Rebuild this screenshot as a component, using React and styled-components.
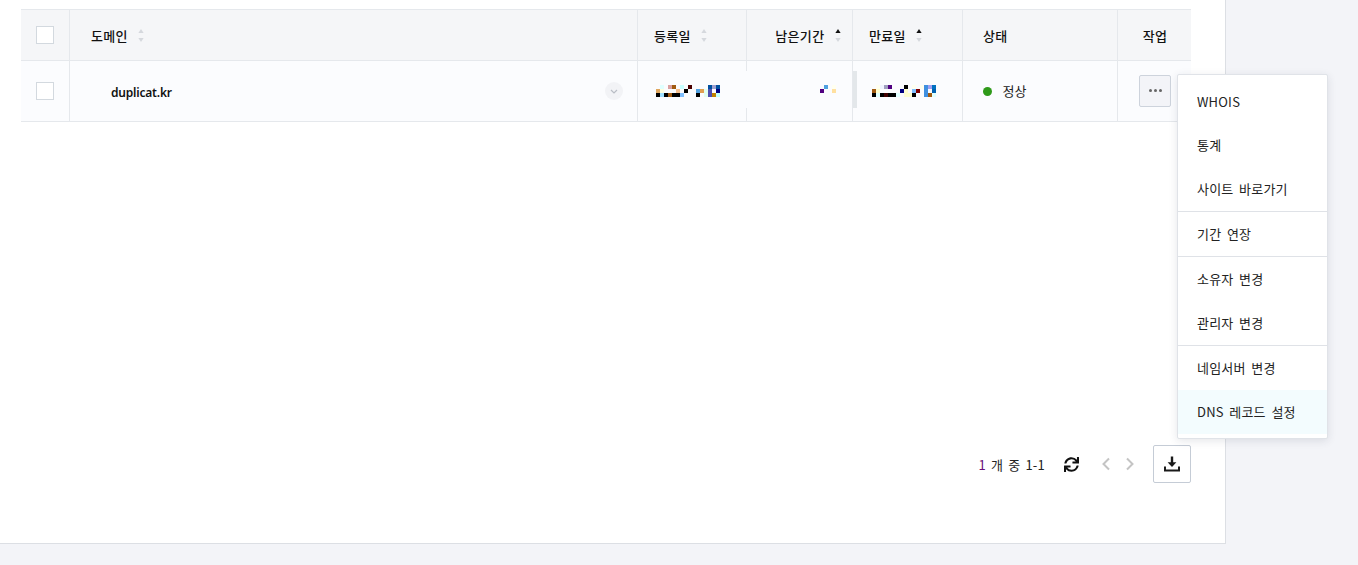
import React from 'react';
import styled, { createGlobalStyle } from 'styled-components';
import { FaSync } from 'react-icons/fa';

const Global = createGlobalStyle`
  html, body { margin: 0; padding: 0; height: 100%; background: #f3f4f8; }
  body { font-family: "Noto Sans CJK KR", "Noto Sans", sans-serif; font-size: 13px; color: #111; overflow: hidden; }
`;

const Page = styled.div`
  position: relative;
  width: 1358px;
  height: 565px;
`;
const Panel = styled.main`
  box-sizing: border-box;
  width: 1226px;
  height: 544px;
  background: #fff;
  border-right: 1px solid #dcdfe4;
  border-bottom: 1px solid #dcdfe4;
  padding: 9px 34px 0 21px;
`;
const Grid = styled.div`
  display: grid;
  grid-template-columns: 49px 568px 109px 106px 110px 155px 73px;
  width: 1170px;
`;
const HeadCell = styled.div`
  box-sizing: border-box;
  height: 52px;
  background: #f5f6f8;
  border-top: 1px solid #e5e8ec;
  border-bottom: 1px solid #e5e8ec;
  border-right: ${p => (p.$last ? 'none' : '1px solid #e5e8ec')};
  display: flex;
  align-items: center;
  justify-content: ${p => p.$justify || 'flex-start'};
  padding: ${p => p.$pad || '0'};
  font-weight: 500;
  font-size: 13px;
  letter-spacing: 0.35px;
  line-height: 1;
  color: #111;
`;
const BodyCell = styled.div`
  box-sizing: border-box;
  position: relative;
  height: 61px;
  background: #fbfcfe;
  border-bottom: 1px solid #e5e8ec;
  border-right: ${p => (p.$last ? 'none' : '1px solid #e5e8ec')};
  display: flex;
  align-items: center;
  justify-content: ${p => p.$justify || 'flex-start'};
  padding: ${p => p.$pad || '0'};
  font-size: 13px;
`;
const BrokenBorder = styled.span`
  position: absolute;
  right: -1px;
  top: 10px;
  width: 1px;
  height: 37px;
  background: #fbfcfe;
`;
const ScrollMark = styled.span`
  position: absolute;
  left: 0;
  top: 10px;
  width: 4px;
  height: 37px;
  background: #e3e7ea;
`;
const Check = styled.span`
  box-sizing: border-box;
  width: 18px;
  height: 18px;
  background: #fff;
  border: 1px solid #d3d9df;
  display: block;
`;
const SortWrap = styled.svg`
  margin-left: 10.5px;
  flex: none;
`;
const DomainName = styled.span`
  font-family: "Noto Sans", sans-serif;
  font-weight: 600;
  font-size: 12px;
  letter-spacing: -0.2px;
  flex: 1;
  padding-top: 2px;
`;
const ExpandDot = styled.span`
  width: 18px;
  height: 18px;
  border-radius: 50%;
  background: #f2f3f6;
  display: flex;
  align-items: center;
  justify-content: center;
`;
const Status = styled.span`
  display: flex;
  align-items: center;
  gap: 10.5px;
  color: #222;
`;
const StatusLabel = styled.span`
  letter-spacing: 0.1px;
  margin-top: -2px;
`;
const Dot = styled.span`
  width: 9px;
  height: 9px;
  border-radius: 50%;
  background: #2f9a1a;
`;
const MoreButton = styled.button`
  box-sizing: border-box;
  width: 32px;
  height: 32px;
  padding: 0;
  margin: -1px 0 0 0;
  background: #f3f4f8;
  border: 1px solid #cdd3dc;
  border-radius: 2px;
  display: flex;
  align-items: center;
  justify-content: center;
  gap: 2px;
`;
const MoreDot = styled.i`
  width: 3px;
  height: 3px;
  border-radius: 50%;
  background: #666;
`;
const Footer = styled.div`
  display: flex;
  justify-content: flex-end;
  align-items: center;
  margin-top: 323px;
  height: 38px;
`;
const Count = styled.span`
  font-size: 13px;
  letter-spacing: 0.2px;
  word-spacing: 2px;
  color: #222;
  margin-right: 19px;
`;
const CountNum = styled.span`
  color: #6a0f7a;
`;
const Refresh = styled.span`
  display: flex;
  color: #111;
  margin-right: 23px;
`;
const Chevron = styled.svg`
  margin-right: ${p => p.$gap}px;
  flex: none;
`;
const DownloadButton = styled.button`
  box-sizing: border-box;
  width: 38px;
  height: 38px;
  padding: 0;
  background: #fff;
  border: 1px solid #c5ccd6;
  border-radius: 2px;
  display: flex;
  align-items: center;
  justify-content: center;
`;
const Menu = styled.ul`
  position: absolute;
  left: 1177px;
  top: 74px;
  box-sizing: border-box;
  width: 151px;
  height: 365px;
  margin: 0;
  padding: 4px 0;
  list-style: none;
  background: #fff;
  border: 1px solid #e0e3e8;
  border-radius: 2px;
  box-shadow: 0 2px 8px rgba(40, 50, 70, 0.12);
`;
const MenuItem = styled.li`
  box-sizing: border-box;
  height: 44px;
  display: flex;
  align-items: center;
  padding: ${p => (p.$latin ? '1px 0 0 19px' : '0 0 2px 19px')};
  font-size: 13px;
  letter-spacing: 0.2px;
  word-spacing: 2.5px;
  color: #222;
  background: ${p => (p.$active ? '#f3fcfe' : 'transparent')};
`;
const Divider = styled.li`
  height: 1px;
  background: #dfe2e7;
`;

const Sort = ({ active }) => (
  <SortWrap width="6" height="15" viewBox="0 0 6 15">
    <path d="M3 1 L5.6 5 H0.4 Z" fill={active ? '#111' : '#d5d8dd'} />
    <path d="M0.4 10 H5.6 L3 14 Z" fill="#d5d8dd" />
  </SortWrap>
);

const Mosaic = ({ w, cells }) => (
  <svg width={w} height="12" viewBox={`0 0 ${w} 12`} shapeRendering="crispEdges">
    {cells.map(([x, y, c], i) => (
      <rect key={i} x={x * 4} y={y * 4} width="4" height="4" fill={c} />
    ))}
  </svg>
);

const dateA = [
  [1,0,'#e0ffff'],[3,0,'#d9a0a0'],[4,0,'#a05a10'],[6,0,'#c8ffff'],[8,0,'#4a0000'],[13,0,'#0050a0'],[14,0,'#a0a0d0'],[15,0,'#0050a0'],
  [0,1,'#e0a860'],[1,1,'#ffffe0'],[5,1,'#f5c090'],[7,1,'#000'],[10,1,'#50a0e0'],[11,1,'#e0a050'],[12,1,'#e0fff0'],[13,1,'#5050b0'],[15,1,'#000080'],
  [0,2,'#000'],[1,2,'#a0e0ff'],[2,2,'#000'],[3,2,'#a05a10'],[4,2,'#000'],[5,2,'#000'],[6,2,'#80c0ff'],[10,2,'#000'],[12,2,'#e0fff0'],[13,2,'#5050b0'],[14,2,'#c08000'],[15,2,'#c0ffff'],
];
const dateB = [
  [1,0,'#50a0e0'],[3,0,'#fffff0'],
  [0,1,'#500080'],[3,1,'#ffe0a0'],
];
const dateC = [
  [1,0,'#fffff0'],[2,0,'#f0f4ff'],[3,0,'#a0a0c0'],[4,0,'#500080'],[8,0,'#000'],[10,0,'#fffff0'],[12,0,'#fffff0'],[13,0,'#4090e0'],[14,0,'#a0a0f0'],[15,0,'#0070c0'],
  [0,1,'#a05a10'],[1,1,'#ffffd0'],[7,1,'#000080'],[8,1,'#ffffd0'],[10,1,'#80c0ff'],[11,1,'#800000'],[13,1,'#4090e0'],[15,1,'#0060b0'],
  [0,2,'#000'],[1,2,'#e0ffff'],[2,2,'#000'],[3,2,'#400000'],[4,2,'#000'],[5,2,'#000'],[6,2,'#e0ffff'],[8,2,'#ffffd0'],[9,2,'#ffffd0'],[10,2,'#000'],[13,2,'#4090e0'],[14,2,'#a05a10'],[15,2,'#e0ffff'],
];

export default function App() {
  return (
    <Page>
      <Global />
      <Panel>
        <Grid>
          <HeadCell $justify="center"><Check /></HeadCell>
          <HeadCell $pad="0 0 0 21px">도메인<Sort /></HeadCell>
          <HeadCell $pad="0 0 0 16px">등록일<Sort /></HeadCell>
          <HeadCell $justify="flex-end" $pad="0 11px 0 0">남은기간<Sort active /></HeadCell>
          <HeadCell $pad="0 0 0 16px">만료일<Sort active /></HeadCell>
          <HeadCell $pad="0 0 0 20px">상태</HeadCell>
          <HeadCell $last $justify="center" $pad="0 0 0 1px">작업</HeadCell>

          <BodyCell $justify="center"><Check /></BodyCell>
          <BodyCell $pad="0 14px 0 41px">
            <DomainName>duplicat.kr</DomainName>
            <ExpandDot>
              <svg width="8" height="5" viewBox="0 0 8 5"><path d="M1 1l3 3 3-3" fill="none" stroke="#b9bdc5" strokeWidth="1.2" /></svg>
            </ExpandDot>
          </BodyCell>
          <BodyCell $pad="0 0 0 18px"><Mosaic w={64} cells={dateA} /><BrokenBorder /></BodyCell>
          <BodyCell $justify="flex-end" $pad="0 16px 0 0"><Mosaic w={16} cells={dateB} /></BodyCell>
          <BodyCell $pad="0 0 0 19px"><ScrollMark /><Mosaic w={64} cells={dateC} /></BodyCell>
          <BodyCell $pad="0 0 0 20px"><Status><Dot /><StatusLabel>정상</StatusLabel></Status></BodyCell>
          <BodyCell $last $justify="flex-start" $pad="0 0 0 21px">
            <MoreButton><MoreDot /><MoreDot /><MoreDot /></MoreButton>
          </BodyCell>
        </Grid>
        <Footer>
          <Count><CountNum>1</CountNum> 개 중 1-1</Count>
          <Refresh><FaSync size={15} /></Refresh>
          <Chevron $gap={16} width="8" height="14" viewBox="0 0 8 14"><path d="M7 1.5L1.5 7 7 12.5" fill="none" stroke="#c4c4c4" strokeWidth="2" /></Chevron>
          <Chevron $gap={19} width="8" height="14" viewBox="0 0 8 14"><path d="M1 1.5L6.5 7 1 12.5" fill="none" stroke="#c4c4c4" strokeWidth="2" /></Chevron>
          <DownloadButton>
            <svg width="16" height="16" viewBox="0 0 16 16">
              <path d="M8 0.5V8.5" stroke="#1a1a1a" strokeWidth="2.4" fill="none" />
              <path d="M3.6 6.2H12.4L8 11Z" fill="#1a1a1a" />
              <path d="M1 10.5V14.5H15V10.5" stroke="#1a1a1a" strokeWidth="2" fill="none" />
            </svg>
          </DownloadButton>
        </Footer>
      </Panel>
      <Menu>
        <MenuItem $latin>WHOIS</MenuItem>
        <MenuItem>통계</MenuItem>
        <MenuItem>사이트 바로가기</MenuItem>
        <Divider />
        <MenuItem>기간 연장</MenuItem>
        <Divider />
        <MenuItem>소유자 변경</MenuItem>
        <MenuItem>관리자 변경</MenuItem>
        <Divider />
        <MenuItem>네임서버 변경</MenuItem>
        <MenuItem $active>DNS 레코드 설정</MenuItem>
      </Menu>
    </Page>
  );
}
